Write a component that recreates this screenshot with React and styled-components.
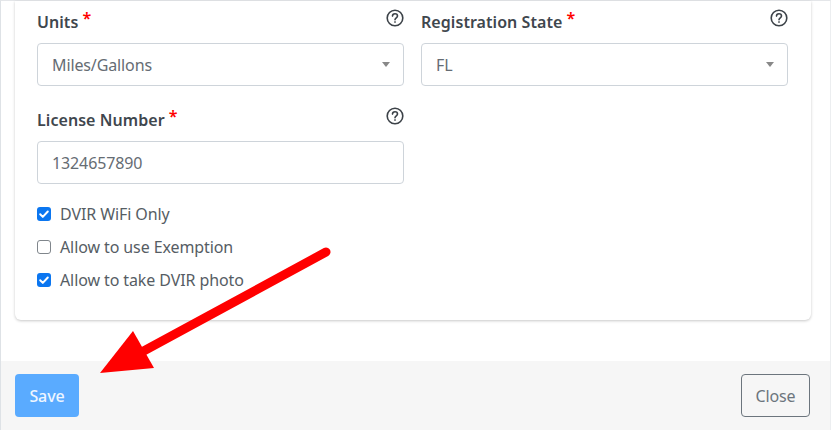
import React from 'react';
import styled, { createGlobalStyle } from 'styled-components';

const GlobalStyle = createGlobalStyle`
  html, body {
    margin: 0;
    padding: 0;
    background: #fff;
  }
  body {
    font-family: "Noto Sans", "Open Sans", sans-serif;
    overflow: hidden;
  }
`;
const Modal = styled.div`
  position: relative;
  width: 831px;
  height: 430px;
  border-left: 1px solid #dee2e6;
  border-right: 1px solid #eceef0;
  border-top: 1px solid #e4e6e9;
  box-sizing: border-box;
  display: flex;
  flex-direction: column;
`;
const Body = styled.div`
  flex: 1;
  padding: 0 19px 0 14px;
`;
const Card = styled.div`
  height: 319px;
  box-sizing: border-box;
  background: #fff;
  border-radius: 0 0 6px 6px;
  box-shadow: 0 1px 3px rgba(0, 0, 0, 0.22);
  padding: 8px 22px 0;
`;
const Grid = styled.div`
  display: grid;
  grid-template-columns: 367px 367px;
  column-gap: 17px;
  row-gap: 21px;
`;
const Field = styled.div`
  display: flex;
  flex-direction: column;
`;
const LabelRow = styled.div`
  display: flex;
  justify-content: space-between;
  height: 34px;
`;
const Label = styled.label`
  font-size: 16px;
  font-weight: 600;
  color: #3f474e;
  line-height: 26px;
  letter-spacing: 0.06px;
`;
const Star = styled.span`
  color: #f00;
  margin-left: 4px;
  position: relative;
  top: -4px;
`;
const Help = styled.svg`
  width: 18px;
  height: 18px;
  flex: none;
`;
const Control = styled.div`
  height: 43px;
  box-sizing: border-box;
  border: 1px solid #ced4da;
  border-radius: 4px;
  padding: 0 14px;
  display: flex;
  align-items: center;
  justify-content: space-between;
  font-size: 16px;
  color: #656c73;
  letter-spacing: -0.12px;
`;
const Caret = styled.span`
  width: 0;
  height: 0;
  border-left: 4px solid transparent;
  border-right: 4px solid transparent;
  border-top: 5px solid #888;
  margin-right: -1px;
`;
const Checks = styled.div`
  display: flex;
  flex-direction: column;
  gap: 11px;
  margin-top: 19px;
`;
const CheckRow = styled.div`
  display: flex;
  align-items: center;
  height: 22px;
  gap: 9px;
  font-size: 16px;
  color: #565d64;
  letter-spacing: -0.1px;
`;
const Box = styled.span`
  width: 14px;
  height: 14px;
  box-sizing: border-box;
  border-radius: 3px;
  display: flex;
  background: ${p => (p.$on ? '#0b76f0' : '#fff')};
  border: ${p => (p.$on ? 'none' : '1px solid #80868c')};
`;
const Footer = styled.div`
  height: 69px;
  background: #f6f6f6;
  padding: 13px 20px 0 14px;
  box-sizing: border-box;
  display: flex;
  justify-content: space-between;
  align-items: flex-start;
`;
const Button = styled.div`
  width: ${p => p.$w}px;
  height: 43px;
  box-sizing: border-box;
  border-radius: 4px;
  display: flex;
  align-items: center;
  justify-content: center;
  font-size: 16px;
  letter-spacing: -0.1px;
`;
const SaveButton = styled(Button)`
  background: #5aabff;
  color: #eef6ff;
  font-weight: 500;
`;
const CloseButton = styled(Button)`
  border: 1px solid #6c757d;
  color: #6c757d;
`;
const Arrow = styled.svg`
  position: absolute;
  left: -1px;
  top: -1px;
  width: 831px;
  height: 433px;
  pointer-events: none;
`;

const HelpIcon = () => (
  <Help viewBox="0 0 18 18" fill="none" stroke="#3c4248" strokeWidth="1.6">
    <circle cx="9" cy="9" r="7.8" />
    <path d="M6.5 7.1c0-1.5 1.1-2.3 2.5-2.3s2.5.8 2.5 2.1c0 1.9-2.5 1.9-2.5 3.9" strokeLinecap="round" />
    <circle cx="9" cy="13" r="0.5" fill="#3c4248" strokeWidth="0.8" />
  </Help>
);

const Tick = () => (
  <svg viewBox="0 0 14 14" width="14" height="14" fill="none" stroke="#fff" strokeWidth="2" strokeLinecap="round" strokeLinejoin="round">
    <path d="M3.2 7.3l2.6 2.6 5-5.4" />
  </svg>
);

function FormField({ label, required, children }) {
  return (
    <Field>
      <LabelRow>
        <Label>
          {label}
          {required && <Star>*</Star>}
        </Label>
        <HelpIcon />
      </LabelRow>
      {children}
    </Field>
  );
}

const checks = [
  { label: 'DVIR WiFi Only', on: true },
  { label: 'Allow to use Exemption', on: false },
  { label: 'Allow to take DVIR photo', on: true },
];

export default function App() {
  return (
    <>
      <GlobalStyle />
      <Modal>
        <Body>
          <Card>
            <Grid>
              <FormField label="Units" required>
                <Control>
                  Miles/Gallons
                  <Caret />
                </Control>
              </FormField>
              <FormField label="Registration State" required>
                <Control>
                  FL
                  <Caret />
                </Control>
              </FormField>
              <FormField label="License Number" required>
                <Control>1324657890</Control>
              </FormField>
            </Grid>
            <Checks>
              {checks.map(c => (
                <CheckRow key={c.label}>
                  <Box $on={c.on}>{c.on && <Tick />}</Box>
                  {c.label}
                </CheckRow>
              ))}
            </Checks>
          </Card>
        </Body>
        <Footer>
          <SaveButton $w={64}>Save</SaveButton>
          <CloseButton $w={69}>Close</CloseButton>
        </Footer>
        <Arrow viewBox="0 0 831 433">
          <path d="M326 252L140 353" stroke="#f00" strokeWidth="9" strokeLinecap="round" />
          <path d="M100 373L133 331L154 368Z" fill="#f00" />
        </Arrow>
      </Modal>
    </>
  );
}
